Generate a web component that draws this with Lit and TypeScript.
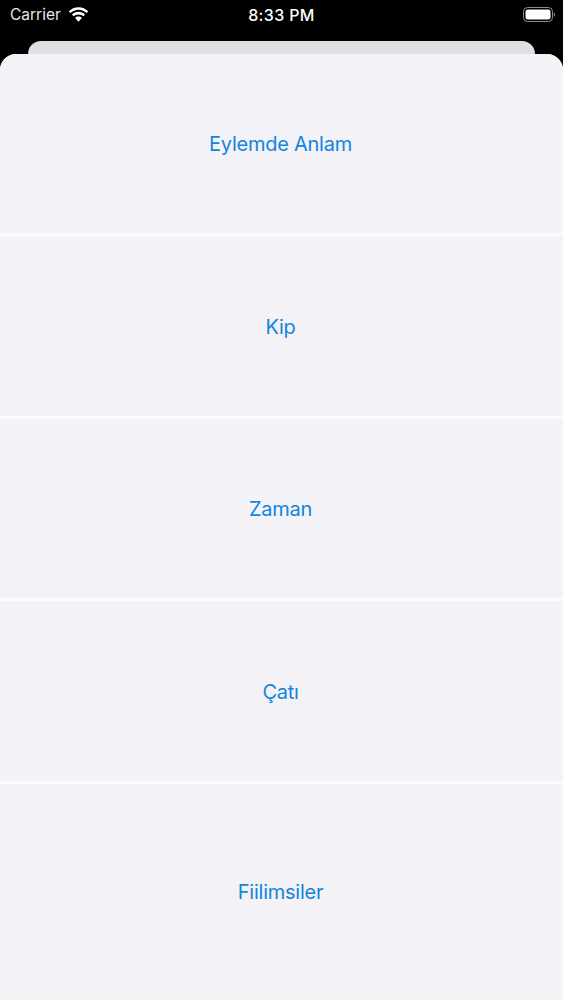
import { LitElement, html, css } from "lit";
import { customElement } from "lit/decorators.js";

const items = ["Eylemde Anlam", "Kip", "Zaman", "Çatı", "Fiilimsiler"];

@customElement("app-root")
export class AppRoot extends LitElement {
  static styles = css`
    :host {
      display: block;
      width: 563px;
      height: 1000px;
      background: #000;
      overflow: hidden;
      font-family: Inter, "Noto Sans", sans-serif;
    }
    .status {
      height: 29px;
      padding: 0 8px 0 10px;
      display: grid;
      grid-template-columns: 1fr auto 1fr;
      align-items: center;
      color: #fff;
    }
    .left { display: flex; align-items: center; gap: 7px; font-size: 15.5px; color: #e8e8e8; }
    .time { font-size: 16px; font-weight: 500; letter-spacing: 0.35px; margin-right: 2px; }
    .right { display: flex; justify-content: flex-end; }
    .back {
      margin: 12px 28px 0;
      height: 13px;
      background: #e0dfe2;
      border-radius: 13px 13px 0 0;
    }
    .sheet {
      height: 946px;
      background: #fbfbfd;
      border-radius: 16px 16px 0 0;
      overflow: hidden;
      display: grid;
      grid-template-rows: 179px 179.5px 179.5px 179.5px 1fr;
      row-gap: 3px;
    }
    .row {
      background: #f2f2f7;
      color: #1484dc;
      font-size: 20px;
      letter-spacing: -0.25px;
      display: flex;
      align-items: center;
      justify-content: center;
      padding: 2px 2px 0 0;
    }
    .row:first-child, .row:last-child { padding-top: 0; }
    svg { display: block; }
  `;

  render() {
    return html`
      <div class="status">
        <div class="left">
          <span>Carrier</span>
          <svg width="21" height="16" viewBox="0 0 20 15" fill="#fff">
            <path d="M10 2.600c3 0 5.700 1.200 7.700 3.100l1.600-1.700C16.900 1.600 13.600.1 10 .1S3.100 1.600.7 4l1.600 1.700C4.300 3.800 7 2.600 10 2.600z"/>
            <path d="M10 7c1.800 0 3.400.7 4.600 1.800l1.600-1.700C14.600 5.500 12.400 4.500 10 4.500S5.400 5.500 3.800 7.100l1.600 1.700C6.600 7.700 8.200 7 10 7z"/>
            <path d="M10 9c-1.200 0-2.300.5-3.200 1.300L10 14l3.200-3.700C12.300 9.500 11.200 9 10 9z"/>
          </svg>
        </div>
        <div class="time">8:33 PM</div>
        <div class="right">
          <svg width="32" height="15" viewBox="0 0 32 15">
            <rect x="0.500" y="0.500" width="29" height="14" rx="4" fill="none" stroke="#8e8e8e" stroke-width="1"/>
            <rect x="2.500" y="2.500" width="25" height="10" rx="2.200" fill="#fff"/>
            <path d="M30.800 5.200v4.600c.7-.3 1.200-1.300 1.200-2.300s-.5-2-1.200-2.300z" fill="#8e8e8e"/>
          </svg>
        </div>
      </div>
      <div class="back"></div>
      <div class="sheet">
        ${items.map((t) => html`<div class="row">${t}</div>`)}
      </div>
    `;
  }
}
